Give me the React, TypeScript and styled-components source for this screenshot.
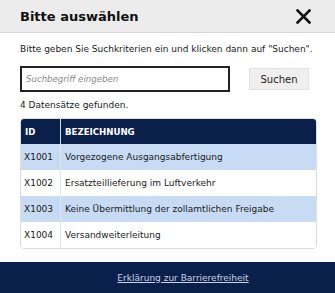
import styled, { createGlobalStyle } from "styled-components";

const GlobalStyle = createGlobalStyle`
  html, body {
    margin: 0;
    padding: 0;
    background: #ffffff;
  }
  body {
    font-family: "DejaVu Sans", Verdana, sans-serif;
    color: #1a1a1a;
  }
`;

const Dialog = styled.div`
  width: 335px;
  height: 293px;
  display: flex;
  flex-direction: column;
  background: #ffffff;
  overflow: hidden;
`;

const Header = styled.div`
  height: 33px;
  box-sizing: border-box;
  display: flex;
  align-items: center;
  justify-content: space-between;
  padding: 0 23px 0 20px;
  background: #ececec;
  border-bottom: 1px solid #d6d6d6;
`;

const Title = styled.h1`
  margin: 0;
  font-size: 13px;
  font-weight: 700;
  color: #111111;
`;

const CloseButton = styled.button`
  border: 0;
  background: none;
  padding: 0;
  width: 17px;
  height: 17px;
  display: flex;
  align-items: center;
  justify-content: center;
  cursor: pointer;
`;

const Body = styled.div`
  flex: 1;
  display: flex;
  flex-direction: column;
  padding: 10px 20px 0 20px;
`;

const Hint = styled.p`
  margin: 0;
  font-size: 9px;
  line-height: 13px;
`;

const SearchRow = styled.div`
  display: flex;
  align-items: center;
  gap: 19px;
  margin-top: 10px;
`;

const SearchInput = styled.input`
  width: 210px;
  height: 26px;
  box-sizing: border-box;
  border: 2px solid #222222;
  padding: 0 4px;
  font-family: "DejaVu Sans", Verdana, sans-serif;
  font-size: 8.6px;
  outline: none;
  &::placeholder {
    color: #8a8a8a;
    font-style: italic;
  }
`;

const SearchButton = styled.button`
  width: 60px;
  height: 22px;
  border: 1px solid #e2e2e2;
  background: #efefef;
  font-family: "DejaVu Sans", Verdana, sans-serif;
  font-size: 10px;
  color: #222222;
  padding: 0;
`;

const Count = styled.p`
  margin: 7px 0 0 0;
  font-size: 9px;
  line-height: 13px;
`;

const TableWrap = styled.div`
  margin-top: 6px;
  width: 295px;
  border: 1px solid #dcdcdc;
  border-radius: 4px;
  overflow: hidden;
`;

const Table = styled.table`
  width: 100%;
  table-layout: fixed;
  border-collapse: collapse;
  font-size: 9px;
`;

const HeadCell = styled.th<{ $first?: boolean }>`
  background: #0b1f4b;
  color: #ffffff;
  text-align: left;
  font-weight: 700;
  font-size: 8.6px;
  height: 25px;
  padding: 0 0 0 4px;
  width: ${(p) => (p.$first ? "35px" : "auto")};
  border-left: ${(p) => (p.$first ? "none" : "1px solid #cfd8e6")};
`;

const Row = styled.tr<{ $shaded: boolean }>`
  background: ${(p) => (p.$shaded ? "#c7dcf4" : "#ffffff")};
`;

const Cell = styled.td<{ $first?: boolean }>`
  height: 26px;
  padding: 0 0 0 ${(p) => (p.$first ? "3px" : "4px")};
  white-space: nowrap;
  border-left: ${(p) => (p.$first ? "none" : "1px solid #dfe6f0")};
`;

const Footer = styled.div`
  height: 31px;
  box-sizing: border-box;
  padding-left: 31px;
  background: #0b1f4b;
  display: flex;
  align-items: center;
  justify-content: center;
`;

const FooterLink = styled.a`
  color: #c8d2e4;
  font-size: 9px;
  text-decoration: underline;
`;

const rows = [
  { id: "X1001", name: "Vorgezogene Ausgangsabfertigung" },
  { id: "X1002", name: "Ersatzteillieferung im Luftverkehr" },
  { id: "X1003", name: "Keine Übermittlung der zollamtlichen Freigabe" },
  { id: "X1004", name: "Versandweiterleitung" },
];

export default function App() {
  return (
    <>
      <GlobalStyle />
      <Dialog>
        <Header>
          <Title>Bitte auswählen</Title>
          <CloseButton aria-label="Schließen">
            <svg width="15" height="15" viewBox="0 0 15 15">
              <path
                d="M1.5 1.5 L13.5 13.5 M13.5 1.5 L1.5 13.5"
                stroke="#111111"
                strokeWidth="2.6"
                strokeLinecap="square"
              />
            </svg>
          </CloseButton>
        </Header>
        <Body>
          <Hint>Bitte geben Sie Suchkriterien ein und klicken dann auf "Suchen".</Hint>
          <SearchRow>
            <SearchInput placeholder="Suchbegriff eingeben" />
            <SearchButton>Suchen</SearchButton>
          </SearchRow>
          <Count>4 Datensätze gefunden.</Count>
          <TableWrap>
            <Table>
              <thead>
                <tr>
                  <HeadCell $first>ID</HeadCell>
                  <HeadCell>BEZEICHNUNG</HeadCell>
                </tr>
              </thead>
              <tbody>
                {rows.map((r, i) => (
                  <Row key={r.id} $shaded={i % 2 === 0}>
                    <Cell $first>{r.id}</Cell>
                    <Cell>{r.name}</Cell>
                  </Row>
                ))}
              </tbody>
            </Table>
          </TableWrap>
        </Body>
        <Footer>
          <FooterLink href="#">Erklärung zur Barrierefreiheit</FooterLink>
        </Footer>
      </Dialog>
    </>
  );
}
